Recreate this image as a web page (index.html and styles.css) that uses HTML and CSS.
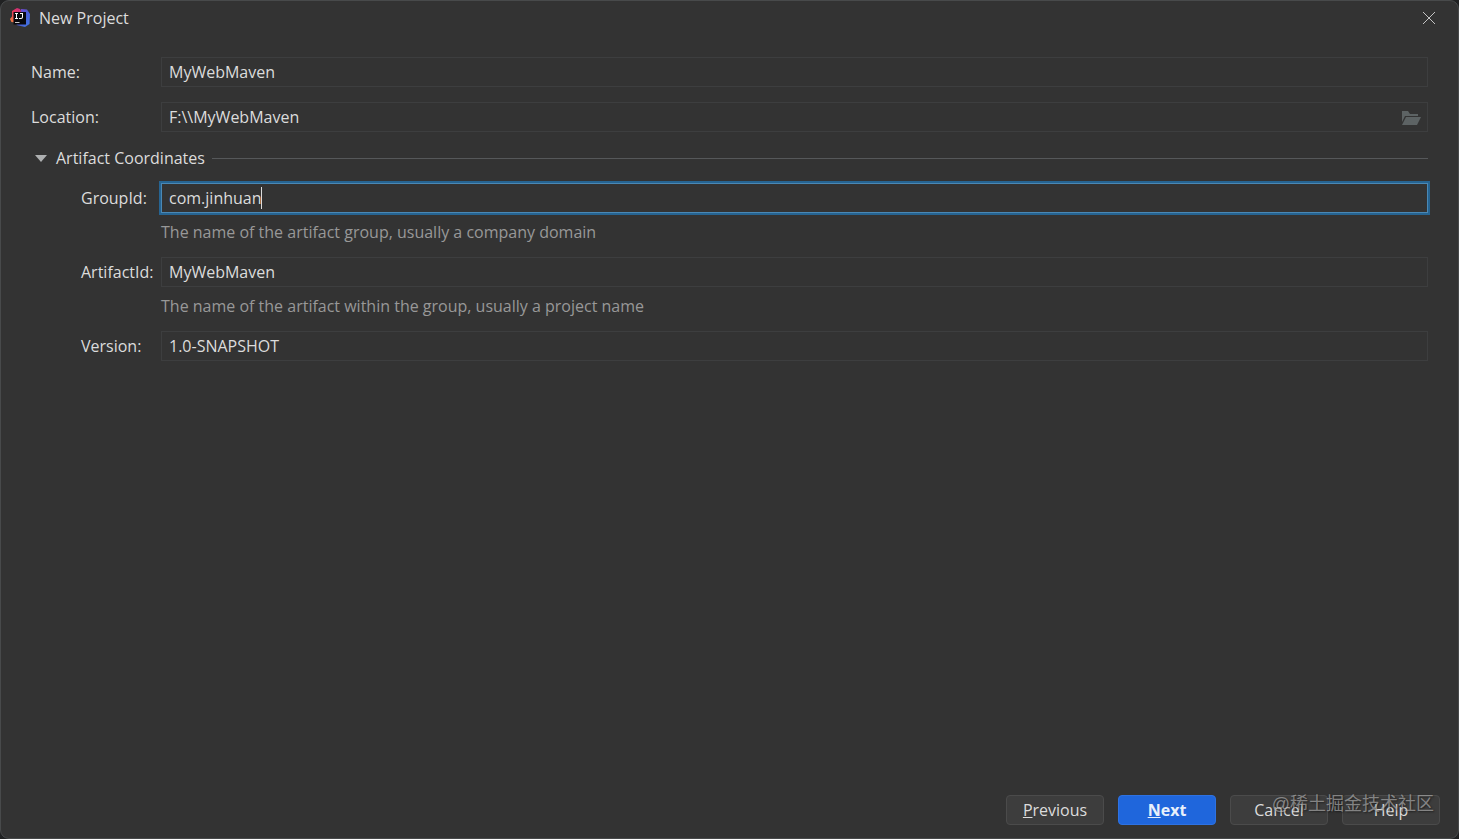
FILE: index.html
```html
<!DOCTYPE html>
<html lang="en">
<head>
    <meta charset="UTF-8">
    <meta name="viewport" content="width=device-width, initial-scale=1.0">
    <title>New Project</title>
    <link rel="stylesheet" href="styles.css">
</head>
<body>
    <main class="dialog">
        <header class="titlebar">
            <svg class="logo" viewBox="0 0 40 40" aria-hidden="true">
                <defs>
                    <linearGradient id="warm" x1="0" y1="1" x2="1" y2="0">
                        <stop offset="0" stop-color="#f58a3c"/>
                        <stop offset="0.5" stop-color="#e8395a"/>
                        <stop offset="1" stop-color="#c32a86"/>
                    </linearGradient>
                    <linearGradient id="cool" x1="0" y1="0" x2="1" y2="1">
                        <stop offset="0" stop-color="#8a3fc4"/>
                        <stop offset="0.5" stop-color="#4a5cd8"/>
                        <stop offset="1" stop-color="#3f78e0"/>
                    </linearGradient>
                </defs>
                <path d="M22 2 34 3 40 12 39 32 30 38 13 34z" fill="url(#cool)"/>
                <path d="M4 6 14 0 20 2 24 12 10 29 3 28 0 22 4 17z" fill="url(#warm)"/>
                <path d="M7 8h25v25H7z" fill="#08080c"/>
                <path d="M10 10h6v2h-2v8h2v2h-6v-2h2v-8h-2zM20 10h6v8q0 4-4 4h-4v-2h4q2 0 2-2v-6h-4z" fill="#fff"/>
                <path d="M10 28h9v2h-9z" fill="#c8c8c8"/>
            </svg>
            <h1>New Project</h1>
            <button class="close" type="button" aria-label="Close">
                <svg viewBox="0 0 14 14" aria-hidden="true"><path d="M1 1 13 13M13 1 1 13"/></svg>
            </button>
        </header>

        <form class="form" id="projectForm">
            <div class="row">
                <label for="name">Name:</label>
                <input type="text" id="name" value="MyWebMaven">
            </div>
            <div class="row">
                <label for="location">Location:</label>
                <div class="field">
                    <input type="text" id="location" value="F:\\MyWebMaven">
                    <button class="browse" type="button" aria-label="Browse">
                        <svg viewBox="0 0 20 16" aria-hidden="true"><path d="M1 12V1h6l2 3h8v2H4z"/><path d="M5 7h15l-4 8H1z"/></svg>
                    </button>
                </div>
            </div>

            <button class="section" type="button" aria-expanded="true">
                <svg viewBox="0 0 12 8" aria-hidden="true"><path d="M0 1h12L6 8z"/></svg>
                <span>Artifact Coordinates</span>
            </button>

            <div class="row nested">
                <label for="groupId">GroupId:</label>
                <div class="field">
                    <input class="active" type="text" id="groupId" value="com.jinhuan">
                    <span class="caret"></span>
                </div>
            </div>
            <p class="hint">The name of the artifact group, usually a company domain</p>
            <div class="row nested">
                <label for="artifactId">ArtifactId:</label>
                <input type="text" id="artifactId" value="MyWebMaven">
            </div>
            <p class="hint">The name of the artifact within the group, usually a project name</p>
            <div class="row nested">
                <label for="version">Version:</label>
                <input type="text" id="version" value="1.0-SNAPSHOT">
            </div>
        </form>

        <footer class="actions">
            <button type="button"><u>P</u>revious</button>
            <button class="primary" type="submit" form="projectForm"><u>N</u>ext</button>
            <button type="button">Cancel</button>
            <button type="button">Help</button>
            <span class="watermark" lang="zh">@稀土掘金技术社区</span>
        </footer>
    </main>
</body>
</html>
```

FILE: styles.css
```css
* {
    box-sizing: border-box;
}
body {
    margin: 0;
    background-color: #202122;
    color: #dcdcdc;
    font-family: "Open Sans", "Noto Sans", sans-serif;
    font-size: 16px;
    line-height: 22px;
}
button, input {
    font: inherit;
    color: inherit;
}
button {
    padding: 0;
    border: none;
    background: none;
}
.dialog {
    display: flex;
    flex-direction: column;
    min-height: 100vh;
    background-color: #333333;
    border: 1px solid #484a4b;
    border-radius: 9px;
}
.titlebar {
    display: flex;
    align-items: center;
    height: 34px;
    padding: 0 22px 0 9px;
}
.logo {
    width: 20px;
    height: 20px;
    margin-right: 9px;
}
h1 {
    flex: 1;
    margin: 0;
    font-size: 16px;
    font-weight: 400;
}
.close svg {
    display: block;
    width: 14px;
    height: 14px;
    fill: none;
    stroke: #c4c4c4;
}
.form {
    padding: 22px 30px 0;
}
.row {
    display: grid;
    grid-template-columns: 130px 1fr;
    align-items: center;
    margin-bottom: 15px;
}
.row.nested {
    grid-template-columns: 80px 1fr;
    margin: 0 0 8px 50px;
}
.field {
    position: relative;
}
input {
    display: block;
    width: 100%;
    height: 30px;
    padding: 0 7px;
    background-color: #333333;
    border: 1px solid #3d3e3f;
    outline: none;
}
input.active {
    border-color: #4a88b5;
    box-shadow: 0 0 0 2px #266492;
}
.caret {
    position: absolute;
    top: 4px;
    left: 100px;
    width: 1px;
    height: 22px;
    background-color: #dcdcdc;
}
.browse {
    position: absolute;
    top: 8px;
    right: 7px;
}
.browse svg {
    display: block;
    width: 20px;
    height: 16px;
    fill: #5d6364;
}
.section {
    display: flex;
    align-items: center;
    width: 100%;
    margin: 15px 0 14px;
    padding-left: 4px;
}
.section svg {
    width: 12px;
    height: 8px;
    margin-right: 9px;
    fill: #aeb0b1;
}
.section::after {
    content: "";
    flex: 1;
    height: 1px;
    margin-left: 7px;
    background-color: #56585a;
}
.hint {
    margin: 0 0 14px 130px;
    color: #989898;
}
.actions {
    position: relative;
    display: flex;
    justify-content: flex-end;
    gap: 14px;
    margin-top: auto;
    padding: 0 18px 13px;
}
.actions button {
    width: 98px;
    height: 30px;
    background-color: #3d3d3d;
    border: 1px solid #4b4b4b;
    border-radius: 4px;
}
.actions .primary {
    background-color: #1f66dc;
    border-color: #2e72e2;
    color: #e8f0fb;
    font-weight: 700;
}
.watermark {
    position: absolute;
    right: 24px;
    bottom: 23px;
    color: rgba(190, 190, 190, 0.6);
    font-family: "Liberation Sans", "Noto Sans CJK SC", sans-serif;
    font-size: 18px;
    text-shadow: 1px 1px 2px rgba(0, 0, 0, 0.5);
    pointer-events: none;
}
```
